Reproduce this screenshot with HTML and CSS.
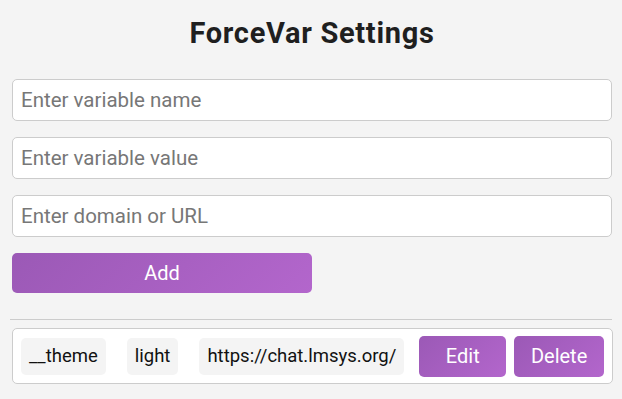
FILE: index.html
```html
<!DOCTYPE html>
<html>
<head>
<meta charset="utf-8">
<link rel="stylesheet" href="styles.css">
</head>
<body>
<div class="wrap">
  <h1 class="title">ForceVar Settings</h1>
  <input class="field" type="text" placeholder="Enter variable name">
  <input class="field" type="text" placeholder="Enter variable value">
  <input class="field" type="text" placeholder="Enter domain or URL">
  <button class="btn add">Add</button>
  <hr class="divider">
  <div class="row">
    <span class="chip">__theme</span>
    <span class="chip">light</span>
    <span class="chip url">https://chat.lmsys.org/</span>
    <button class="btn small edit">Edit</button>
    <button class="btn small del">Delete</button>
  </div>
</div>
</body>
</html>
```

FILE: styles.css
```css
html, body {
  margin: 0;
  padding: 0;
  background: #f4f4f4;
  font-family: Roboto, "Liberation Sans", sans-serif;
}
.wrap {
  padding: 0 10px 0 12px;
  display: flex;
  flex-direction: column;
}
.title {
  margin: 14px 0 27px;
  text-align: center;
  font-size: 29px;
  font-weight: 700;
  letter-spacing: 0.7px;
  line-height: 38px;
  color: #1f1f1f;
}
.field {
  box-sizing: border-box;
  height: 42px;
  margin-bottom: 16px;
  padding: 0 8px;
  border: 1px solid #cccccc;
  border-radius: 5px;
  background: #fff;
  font-family: inherit;
  font-size: 20.5px;
  color: #333;
}
.field::placeholder {
  color: #777;
}
.btn {
  border: none;
  border-radius: 5px;
  background: linear-gradient(135deg, #9b59b6, #b366cc);
  color: #fff;
  font-family: inherit;
  font-size: 20px;
  cursor: pointer;
  padding: 0;
}
.add {
  width: 300px;
  height: 40px;
}
.divider {
  margin: 26px 0 8px;
  border: none;
  border-top: 1px solid #cccccc;
  width: 602px;
  align-self: flex-start;
  margin-left: -2px;
}
.row {
  display: flex;
  align-items: center;
  width: 601px;
  box-sizing: border-box;
  height: 56px;
  padding: 0 8px;
  background: #fff;
  border: 1px solid #cccccc;
  border-radius: 5px;
}
.chip {
  background: #f4f4f4;
  border-radius: 5px;
  padding: 0 8px;
  height: 37px;
  line-height: 37px;
  font-size: 18.5px;
  color: #111;
  margin-right: 21px;
}
.chip.url {
  margin-right: 15px;
}
.small {
  height: 41px;
  font-size: 20px;
}
.edit {
  width: 87px;
  margin-right: 8px;
}
.del {
  width: 90px;
}
```
